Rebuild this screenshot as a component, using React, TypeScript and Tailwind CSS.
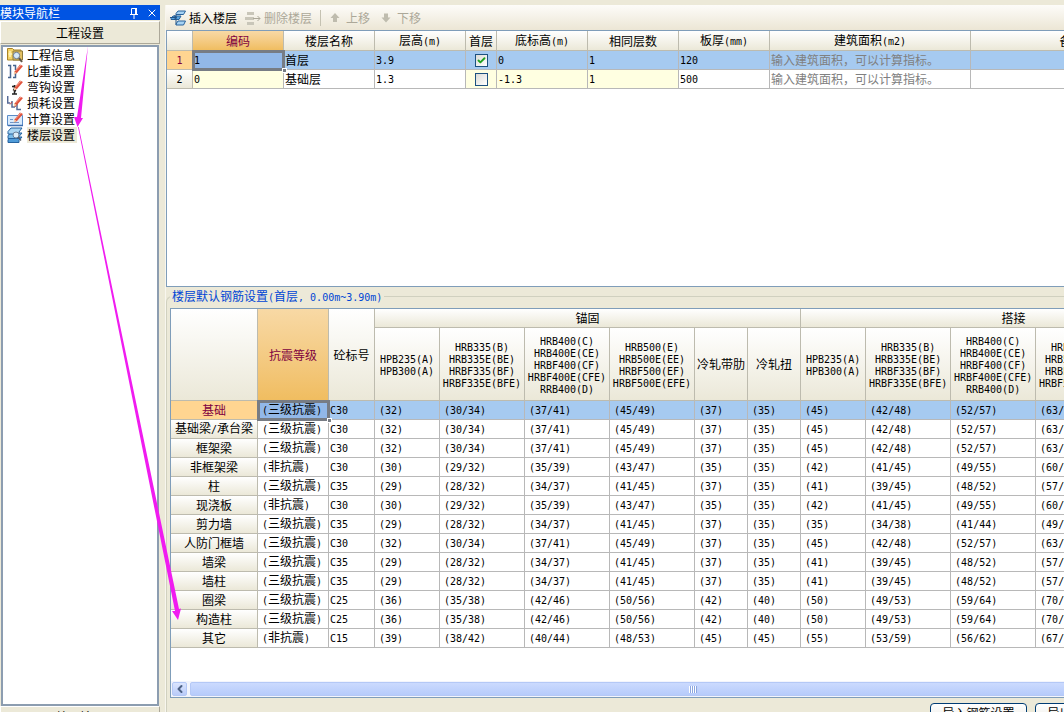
import { useState } from "react";
import type { ReactNode } from "react";
import clsx from "clsx";
import { Check, ChevronLeft, X } from "lucide-react";

interface Floor {
  code: string;
  name: string;
  height: string;
  first: boolean;
  bottom: string;
  same: string;
  slab: string;
}

const FLOORS: Floor[] = [
  { code: "1", name: "首层", height: "3.9", first: true, bottom: "0", same: "1", slab: "120" },
  { code: "0", name: "基础层", height: "1.3", first: false, bottom: "-1.3", same: "1", slab: "500" },
];

const FLOOR_HEADERS = ["编码", "楼层名称", "层高(m)", "首层", "底标高(m)", "相同层数", "板厚(mm)", "建筑面积(m2)", "备注"];

const STEEL_HEADERS = [
  ["HPB235(A)", "HPB300(A)"],
  ["HRB335(B)", "HRB335E(BE)", "HRBF335(BF)", "HRBF335E(BFE)"],
  ["HRB400(C)", "HRB400E(CE)", "HRBF400(CF)", "HRBF400E(CFE)", "RRB400(D)"],
  ["HRB500(E)", "HRB500E(EE)", "HRBF500(EF)", "HRBF500E(EFE)"],
  ["冷轧带肋"],
  ["冷轧扭"],
];

// name, seismic grade, concrete, then anchorage and lap values
const MEMBERS: [string, string, string, string][] = [
  ["基础", "三级抗震", "C30", "32 30/34 37/41 45/49 37 35 45 42/48 52/57 63/69 52 49"],
  ["基础梁/承台梁", "三级抗震", "C30", "32 30/34 37/41 45/49 37 35 45 42/48 52/57 63/69 52 49"],
  ["框架梁", "三级抗震", "C30", "32 30/34 37/41 45/49 37 35 45 42/48 52/57 63/69 52 49"],
  ["非框架梁", "非抗震", "C30", "30 29/32 35/39 43/47 35 35 42 41/45 49/55 60/66 49 49"],
  ["柱", "三级抗震", "C35", "29 28/32 34/37 41/45 37 35 41 39/45 48/52 57/63 52 49"],
  ["现浇板", "非抗震", "C30", "30 29/32 35/39 43/47 35 35 42 41/45 49/55 60/66 49 49"],
  ["剪力墙", "三级抗震", "C35", "29 28/32 34/37 41/45 37 35 35 34/38 41/44 49/54 44 42"],
  ["人防门框墙", "三级抗震", "C30", "32 30/34 37/41 45/49 37 35 45 42/48 52/57 63/69 52 49"],
  ["墙梁", "三级抗震", "C35", "29 28/32 34/37 41/45 37 35 41 39/45 48/52 57/63 52 49"],
  ["墙柱", "三级抗震", "C35", "29 28/32 34/37 41/45 37 35 41 39/45 48/52 57/63 52 49"],
  ["圈梁", "三级抗震", "C25", "36 35/38 42/46 50/56 42 40 50 49/53 59/64 70/78 59 56"],
  ["构造柱", "三级抗震", "C25", "36 35/38 42/46 50/56 42 40 50 49/53 59/64 70/78 59 56"],
  ["其它", "非抗震", "C15", "39 38/42 40/44 48/53 45 45 55 53/59 56/62 67/74 63 63"],
];

const HEAD_BASE = "border-r border-b border-[#bdbbae] p-0 text-center font-normal";
const HEAD = "bg-linear-to-b from-white to-[#ebe8d8]";
const HEAD_ACTIVE = "bg-linear-to-b from-[#f8d9a5] to-[#f0bd60] text-[#800040]";
const ROW_ACTIVE = "bg-[#ffd591] text-[#800040]";
const CELL = "border-r border-b border-[#b8b8b8] p-0 whitespace-nowrap";
const SELECTED = "relative outline-3 -outline-offset-2 outline-[#777c84] bg-[#92b8e8]";

// Latin runs use a half-width face so that they line up with the full-width glyphs
function Mixed({ children }: { children: string }) {
  const parts = children.split(/([\x20-\x7e]+)/).filter(Boolean);
  return (
    <>
      {parts.map((part, i) =>
        /^[\x20-\x7e]/.test(part) ? (
          <span key={i} className="font-['DejaVu_Sans_Mono',monospace] text-[10px]">
            {part}
          </span>
        ) : (
          part
        )
      )}
    </>
  );
}

function Handle() {
  return <span className="absolute -right-1 -bottom-1 z-10 size-[5px] border border-white bg-[#777c84]" />;
}

function Icon({ children }: { children: ReactNode }) {
  return (
    <svg viewBox="0 0 16 16" className="size-4 shrink-0" fill="none" aria-hidden="true">
      {children}
    </svg>
  );
}

function Pencil() {
  return (
    <>
      <path d="M7.5 8.500 13 1.500l3 1.500-6 7-3 1.500z" fill="#e0523c" />
      <path d="M8.500 8 14 2" stroke="#f6a08c" />
      <path d="m6.500 11.500 1-3 2 1.500z" fill="#f5d9b0" />
    </>
  );
}

const NAV_ITEMS = [
  {
    label: "工程信息",
    icon: (
      <Icon>
        <path d="M.5 1.500h5l1.500 1.500h7v10H.5z" fill="#f4d367" stroke="#a98529" />
        <path d="M3 4v6M1.500 7h4" stroke="#fff3b5" strokeWidth="1.500" />
        <path d="M6 4h9.500v9H6z" fill="#e3c063" stroke="#8f7a3b" />
        <circle cx="9.500" cy="8.500" r="3.200" fill="#d5e9fa" stroke="#6e7c92" />
        <path d="m12 11 3 4" stroke="#5c5548" strokeWidth="2" />
      </Icon>
    ),
  },
  {
    label: "比重设置",
    icon: (
      <Icon>
        <path d="M1 2.500h2.500v12H1M6 2.500h2.500V7M8.500 9v5.500H6" stroke="#47658f" strokeWidth="1.500" />
        <Pencil />
      </Icon>
    ),
  },
  {
    label: "弯钩设置",
    icon: (
      <Icon>
        <path d="M7.500 6v9M5 7.500h4M5 15h5M6 10.500l3 1.500" stroke="#222" strokeWidth="1.500" />
        <Pencil />
      </Icon>
    ),
  },
  {
    label: "损耗设置",
    icon: (
      <Icon>
        <path d="M.7 1v7h2.500M5 6v6h3M10 9v5.500h4" stroke="#576b96" strokeWidth="1.500" />
        <path d="M3 9.500 5 7M8 12l2-3" stroke="#be4b48" />
        <Pencil />
      </Icon>
    ),
  },
  {
    label: "计算设置",
    icon: (
      <Icon>
        <path d="M.5 4.500h15v10H.5z" fill="#d9ebfc" stroke="#5b8cc7" />
        <path d="M1 14.500h15" stroke="#3c6eb0" strokeWidth="1.500" />
        <path d="M3 8.500h3M3 11.500h9" stroke="#6f95c5" />
        <Pencil />
      </Icon>
    ),
  },
  {
    label: "楼层设置",
    icon: (
      <Icon>
        <path d="M1 12.500 4 10h11l-3 3.500v2H1z" fill="#4e9bd8" stroke="#26639f" />
        <path d="M1 8.500 4 6h11l-3 3.500v2H1z" fill="#79bce9" stroke="#26639f" />
        <path d="M1 4.500 4 1h11l-3 4v2H1z" fill="#a9d6f3" stroke="#26639f" />
        <circle cx="9" cy="8" r="3" fill="#dceefa" stroke="#6d8298" />
        <path d="m11 10 3 3.500" stroke="#556170" strokeWidth="1.500" />
      </Icon>
    ),
  },
];

const PANEL_BAR = "shrink-0 border border-t-white border-r-[#aca899] border-b-[#aca899] border-l-white bg-[#ece9d8]";

function Sidebar() {
  const [active, setActive] = useState("楼层设置");

  return (
    <aside className="flex w-40 shrink-0 flex-col">
      <header className="flex h-[15px] shrink-0 items-center bg-[#0054e3] pr-0.5 text-white">
        <h2 className="flex-1">模块导航栏</h2>
        <button title="自动隐藏" className="mr-1.5">
          <svg viewBox="0 0 12 12" className="size-3" fill="none" stroke="currentColor" aria-hidden="true">
            <path d="M3.500 7V1.500h4V7M2 7.500h8M6 8v4" />
            <path d="M8 1v6" strokeWidth="2" />
          </svg>
        </button>
        <button title="关闭">
          <X className="size-3" />
        </button>
      </header>
      <button className={clsx(PANEL_BAR, "mt-px h-[23px]")}>工程设置</button>
      <nav className="mx-px mt-px flex flex-1 flex-col items-start border-2 border-[#8c9db0] bg-white pl-1">
        {NAV_ITEMS.map(({ label, icon }) => (
          <button key={label} onClick={() => setActive(label)} className="flex h-4 items-center gap-1">
            {icon}
            <span className={clsx("h-4 pr-0.5 leading-4", active === label && "bg-[#ece9d8]")}>{label}</span>
          </button>
        ))}
      </nav>
      <button className={clsx(PANEL_BAR, "mb-0.5 h-[22px]")}>绘图输入</button>
    </aside>
  );
}

function Toolbar() {
  return (
    <div className="flex h-[25px] shrink-0 items-center bg-linear-to-b from-[#fdfcf9] to-[#ece6d5] pl-1 text-[#aca899]">
      <button className="flex items-center gap-[3px] text-black">
        <Icon>
          <path d="M6 3.500 8 1h7.500l-2 3.500H6zM6 14l2-3h7.500l-2 4H6z" fill="#a6d2f3" stroke="#28629c" />
          <path d="M1 8.500 3 6h8l-2 3.500H1z" fill="#5ba5df" stroke="#28629c" />
          <path d="M6 4.500v10M0 7.500h6M4 5.500l2.500 2L4 9.500" stroke="#245487" />
        </Icon>
        插入楼层
      </button>
      <button disabled className="ml-2 flex items-center gap-[3px]">
        <Icon>
          <path d="M2 2h7v3H2zM0 7h9v3H0zM2 12h7v3H2z" fill="#c9c6b9" />
          <path d="M8 8.500h7M12.500 6 15 8.500 12.500 11" stroke="#aca899" />
        </Icon>
        删除楼层
      </button>
      <span className="ml-2 h-4 w-px bg-[#c5c2b2]" />
      <button disabled className="ml-1.5 flex items-center gap-[3px]">
        <Icon>
          <path d="m8 3 4.500 5H10v4H6V8H3.500z" fill="#bfbcae" />
        </Icon>
        上移
      </button>
      <button disabled className="ml-2 flex items-center gap-[3px]">
        <Icon>
          <path d="m8 12.500 4.500-5H10V3.500H6v4H3.500z" fill="#bfbcae" />
        </Icon>
        下移
      </button>
    </div>
  );
}

function FloorGrid() {
  const [firstFloor, setFirstFloor] = useState(FLOORS.map((f) => f.first));

  return (
    <div className="h-[257px] shrink-0 overflow-hidden border border-r-0 border-[#7f9db9] bg-white">
      <table className="w-[1006px] table-fixed border-separate border-spacing-0 leading-4">
        <colgroup>
          <col className="w-[26px]" />
          <col className="w-[91px]" />
          <col className="w-[91px]" />
          <col className="w-[91px]" />
          <col className="w-[31px]" />
          <col className="w-[91px]" />
          <col className="w-[91px]" />
          <col className="w-[91px]" />
          <col className="w-[201px]" />
          <col className="w-[202px]" />
        </colgroup>
        <thead>
          <tr className="h-5">
            <th className={clsx(HEAD_BASE, HEAD)} />
            {FLOOR_HEADERS.map((title, i) => (
              <th key={title} className={clsx(HEAD_BASE, i === 0 ? HEAD_ACTIVE : HEAD)}>
                <Mixed>{title}</Mixed>
              </th>
            ))}
          </tr>
        </thead>
        <tbody>
          {FLOORS.map((floor, i) => {
            const selected = i === 0;
            const tint = selected ? "bg-[#a6caf0]" : "bg-[#ffffe1]";
            const plain = selected ? "bg-[#a6caf0]" : "bg-white";
            return (
              <tr key={floor.code} className="h-[19px]">
                <th className={clsx(HEAD_BASE, selected ? ROW_ACTIVE : HEAD)}>
                  <Mixed>{String(i + 1)}</Mixed>
                </th>
                <td className={clsx(CELL, "pl-px", selected ? SELECTED : tint)}>
                  <Mixed>{floor.code}</Mixed>
                  {selected && <Handle />}
                </td>
                <td className={clsx(CELL, "pl-px", plain)}>{floor.name}</td>
                <td className={clsx(CELL, "pl-px", plain)}>
                  <Mixed>{floor.height}</Mixed>
                </td>
                <td className={clsx(CELL, tint)}>
                  <label className="relative mx-auto block size-[13px]">
                    <input
                      type="checkbox"
                      aria-label={`${floor.name} 首层`}
                      checked={firstFloor[i]}
                      onChange={() => setFirstFloor(firstFloor.map((v, n) => (n === i ? !v : v)))}
                      className="block size-[13px] appearance-none border border-[#1c5180] bg-linear-to-br from-[#dcdcd7] to-white"
                    />
                    {firstFloor[i] && (
                      <Check className="pointer-events-none absolute top-0.5 left-0.5 size-[9px] text-[#21a121]" strokeWidth={5} />
                    )}
                  </label>
                </td>
                <td className={clsx(CELL, "pl-px", tint)}>
                  <Mixed>{floor.bottom}</Mixed>
                </td>
                <td className={clsx(CELL, "pl-px", tint)}>
                  <Mixed>{floor.same}</Mixed>
                </td>
                <td className={clsx(CELL, "pl-px", plain)}>
                  <Mixed>{floor.slab}</Mixed>
                </td>
                <td className={clsx(CELL, "pl-px text-[#808080]", plain)}>输入建筑面积，可以计算指标。</td>
                <td className={clsx(CELL, plain)} />
              </tr>
            );
          })}
        </tbody>
      </table>
    </div>
  );
}

function SteelTable() {
  return (
    <table className="w-[1056px] table-fixed border-separate border-spacing-0 leading-4">
      <colgroup>
        <col className="w-[87px]" />
        <col className="w-[71px]" />
        <col className="w-[46px]" />
        {[0, 1].map((group) => [
          <col key={`${group}a`} className="w-[65px]" />,
          <col key={`${group}b`} className="w-[85px]" />,
          <col key={`${group}c`} className="w-[85px]" />,
          <col key={`${group}d`} className="w-[85px]" />,
          <col key={`${group}e`} className="w-[53px]" />,
          <col key={`${group}f`} className="w-[53px]" />,
        ])}
      </colgroup>
      <thead>
        <tr className="h-[19px]">
          <th rowSpan={2} className={clsx(HEAD_BASE, HEAD)} />
          <th rowSpan={2} className={clsx(HEAD_BASE, HEAD_ACTIVE)}>
            抗震等级
          </th>
          <th rowSpan={2} className={clsx(HEAD_BASE, HEAD)}>
            砼标号
          </th>
          <th colSpan={6} className={clsx(HEAD_BASE, HEAD)}>
            锚固
          </th>
          <th colSpan={6} className={clsx(HEAD_BASE, HEAD)}>
            搭接
          </th>
        </tr>
        <tr className="h-[73px]">
          {[...STEEL_HEADERS, ...STEEL_HEADERS].map((lines, i) => (
            <th key={i} className={clsx(HEAD_BASE, HEAD, "leading-3 whitespace-nowrap")}>
              {lines.map((line) => (
                <div key={line} className="h-3">
                  <Mixed>{line}</Mixed>
                </div>
              ))}
            </th>
          ))}
        </tr>
      </thead>
      <tbody>
        {MEMBERS.map(([name, grade, concrete, values], row) => {
          const selected = row === 0;
          return (
            <tr key={name} className={clsx("h-[19px]", selected && "bg-[#a6caf0]")}>
              <th className={clsx(HEAD_BASE, "whitespace-nowrap", selected ? ROW_ACTIVE : HEAD)}>
                <Mixed>{name}</Mixed>
              </th>
              <td className={clsx(CELL, "pl-1", selected && SELECTED)}>
                <Mixed>{`(${grade})`}</Mixed>
                {selected && <Handle />}
              </td>
              <td className={clsx(CELL, "pl-px")}>
                <Mixed>{concrete}</Mixed>
              </td>
              {values.split(" ").map((value, i) => (
                <td key={i} className={clsx(CELL, "pl-1")}>
                  <Mixed>{`(${value})`}</Mixed>
                </td>
              ))}
            </tr>
          );
        })}
      </tbody>
    </table>
  );
}

function ScrollBar() {
  return (
    <div className="flex h-4 shrink-0 gap-px bg-[#f3f5fc] py-px pl-px">
      <button
        title="向左滚动"
        className="flex w-[15px] shrink-0 items-center justify-center rounded-xs border border-[#b4c8f6] bg-linear-to-b from-[#dbe5fe] to-[#b9cbf8]"
      >
        <ChevronLeft className="size-3 text-[#4d6185]" strokeWidth={4} />
      </button>
      <div className="ml-0.5 flex w-[1004px] shrink-0 items-center justify-center gap-px rounded-xs border border-[#b4c8f6] bg-linear-to-b from-[#cbdafe] to-[#b6cbfb]">
        {[0, 1, 2, 3].map((n) => (
          <span key={n} className="h-[7px] w-px border-l border-white bg-[#8ca6df] shadow-[1px_0_0_#8ca6df]" />
        ))}
      </div>
    </div>
  );
}

function SteelSettings() {
  return (
    <fieldset className="mt-0.5 flex min-w-0 flex-1 flex-col rounded-l-md border border-r-0 border-[#d0d0bf] pb-1.5 pl-[3px]">
      <legend className="h-3.5 px-0.5 leading-3.5 text-[#0046d5]">
        <Mixed>楼层默认钢筋设置(首层, 0.00m~3.90m)</Mixed>
      </legend>
      <div className="mt-[5px] flex min-h-0 flex-1 flex-col overflow-hidden border border-r-0 border-[#7f9db9] bg-white">
        <div className="min-h-0 flex-1 overflow-hidden">
          <SteelTable />
        </div>
        <ScrollBar />
      </div>
      <div className="mt-[5px] flex h-5 shrink-0 justify-end gap-2 overflow-hidden">
        {["导入钢筋设置", "导出钢筋设置"].map((label) => (
          <button
            key={label}
            className="-mr-[68px] w-[97px] shrink-0 rounded-sm border border-[#003c74] bg-linear-to-b from-white to-[#ecebe5] first:mr-0"
          >
            {label}
          </button>
        ))}
      </div>
    </fieldset>
  );
}

function Arrows() {
  return (
    <svg className="pointer-events-none absolute top-0 left-0 z-20 h-[640px] w-[200px]" fill="#f01cf0" aria-hidden="true">
      <path d="M88 46 81 118h2L77.500 127l-3.500-10h3z" />
      <path d="M78 127h.8L179 609l2-.5-3 11.500-6-9h3z" />
    </svg>
  );
}

export default function App() {
  return (
    <div className="relative h-screen overflow-hidden bg-[#ece9d8] font-['Noto_Sans_CJK_SC',sans-serif] text-xs leading-4 text-black">
      <div className="flex h-[calc(100vh+18px)] pt-[5px]">
        <Sidebar />
        <main className="ml-[5px] flex min-w-0 flex-1 flex-col border-l border-[#f8f6ee]">
          <Toolbar />
          <FloorGrid />
          <SteelSettings />
        </main>
      </div>
      <Arrows />
    </div>
  );
}
